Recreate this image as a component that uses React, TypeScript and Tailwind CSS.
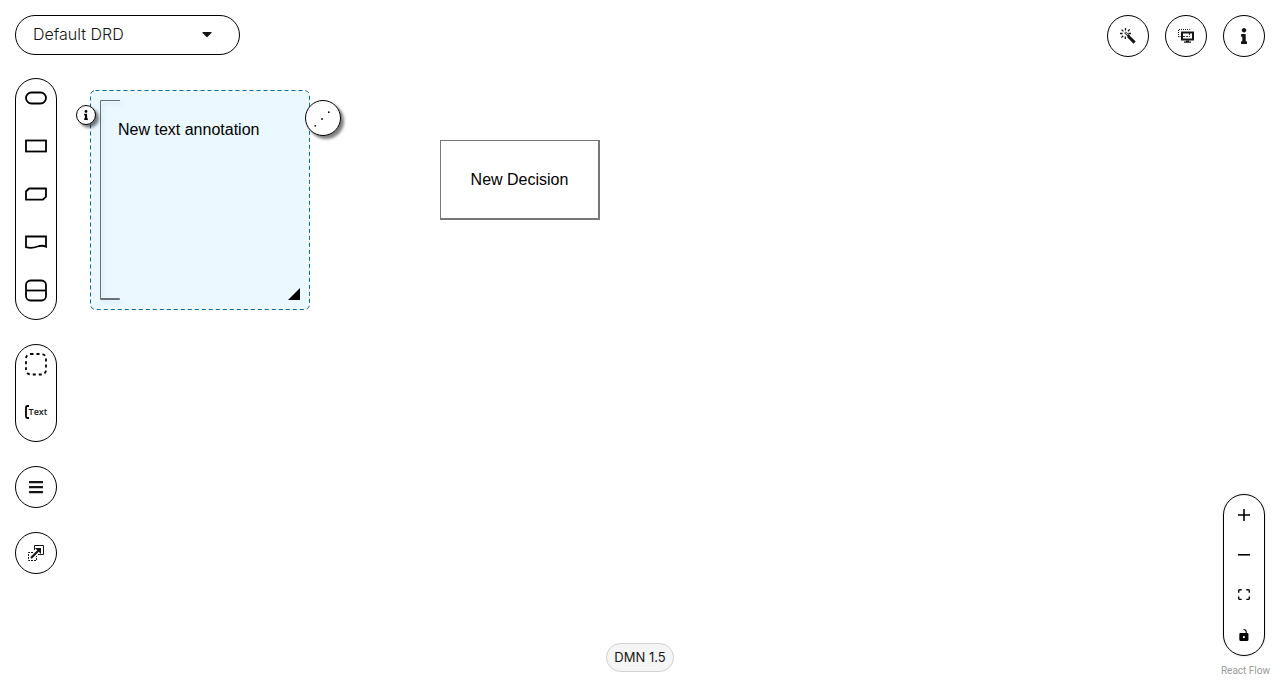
import type { ReactNode } from "react";
import { FaBars, FaCaretDown, FaInfo } from "react-icons/fa";

function Round({ label, children }: { label: string; children: ReactNode }) {
  return (
    <button
      type="button"
      aria-label={label}
      className="flex size-[42px] shrink-0 items-center justify-center rounded-full border border-black bg-white pb-px text-[#151515]"
    >
      {children}
    </button>
  );
}

function PaletteItem({ label, children }: { label: string; children: ReactNode }) {
  return (
    <button type="button" aria-label={label} className="flex h-[38px] w-10 items-center justify-center">
      {children}
    </button>
  );
}

function Shape({ children }: { children: ReactNode }) {
  return (
    <svg width="24" height="24" viewBox="0 0 24 24" fill="none" stroke="#000" strokeWidth="1.8" aria-hidden="true">
      {children}
    </svg>
  );
}

function Control({ label, viewBox, d }: { label: string; viewBox: string; d: string }) {
  return (
    <button type="button" aria-label={label} className="flex size-10 items-center justify-center">
      <svg viewBox={viewBox} className="max-h-3 w-3" aria-hidden="true">
        <path d={d} />
      </svg>
    </button>
  );
}

function WandIcon() {
  return (
    <svg width="16" height="16" viewBox="0 0 16 16" fill="none" stroke="#151515" aria-hidden="true">
      <path d="M8 8l6.6 6.6" strokeWidth="3" />
      <path d="M5 4.2l4 4" strokeWidth="2.2" />
      <path d="M5.2 4.4l2.6 2.6" stroke="#fff" strokeWidth="0.9" />
      <path
        d="M5.5 0v2.6M1.6 1.6l1.8 1.8M0 5.5h2.6M1.4 9.6l1.9-1.9M5.3 11V8.4M9.7 1.4L7.9 3.2M11 5.5H8.4"
        strokeWidth="1.3"
      />
    </svg>
  );
}

function ScreensIcon() {
  return (
    <svg width="16" height="16" viewBox="0 0 16 16" fill="none" stroke="#151515" aria-hidden="true">
      <path d="M.5 9V1.5h11V3M.5 8.5H3" strokeDasharray="1 1" />
      <rect x="4" y="4.5" width="11" height="7" strokeWidth="2" />
      <path d="M5 8.5h7M11.5 5v3" strokeDasharray="2 1" strokeWidth="0.9" />
      <path d="M8 13h3M6 14.2h7" strokeWidth="1.2" />
    </svg>
  );
}

function ExpandIcon() {
  return (
    <svg width="16" height="16" viewBox="0 0 16 16" fill="none" stroke="#151515" aria-hidden="true">
      <path d="M6.5 5V.5h9v9H10" />
      <path d="M5 7.5H.5v8h8V11" strokeDasharray="2 1" />
      <path d="M3 13l8-8" strokeWidth="2.2" />
      <path d="M7 3h6v6z" fill="#151515" stroke="none" />
    </svg>
  );
}

const box = "w-[42px] rounded-[21px] border border-black bg-white";

export default function App() {
  return (
    <div className="relative flex min-h-screen flex-col bg-white font-['Inter','Liberation_Sans',sans-serif] text-[#151515]">
      <main className="absolute inset-0 overflow-hidden font-['Liberation_Sans',Arial,sans-serif] text-base text-black">
        <section aria-label="Text annotation" className="absolute top-[90px] left-[90px] h-[220px] w-[220px]">
          <svg width="220" height="220" viewBox="0 0 220 220" fill="none" className="absolute inset-0" aria-hidden="true">
            <rect x=".5" y=".5" width="219" height="219" rx="5" fill="#ebf8ff" stroke="#006ba4" strokeDasharray="4 3" />
            <path
              d="M30 10.5H10.5V209H30"
              stroke="#6b7074"
              className="drop-shadow-[2px_3px_2px_rgba(0,75,120,0.15)]"
            />
            <path d="M29.5 209h-19" stroke="#6b7074" strokeWidth="2" />
            <path d="M210 198v12h-12z" fill="#000" />
          </svg>
          <p className="relative pt-[30px] pl-7 leading-5">New text annotation</p>
          <button
            type="button"
            aria-label="Node properties"
            className="absolute top-[15px] -left-3.5 flex size-5 items-center justify-center rounded-full border border-black bg-white shadow-[3px_3px_3px_rgba(0,0,0,0.5)]"
          >
            <FaInfo size={10} />
          </button>
          <button
            type="button"
            aria-label="Add association"
            className="absolute top-2.5 left-[215px] flex size-9 items-center justify-center rounded-full border border-black bg-white shadow-[3px_3px_3px_rgba(0,0,0,0.5)]"
          >
            <svg width="20" height="20" viewBox="0 0 20 20" aria-hidden="true">
              <circle cx="2.2" cy="17.8" r="0.9" />
              <circle cx="9" cy="11" r="0.9" />
              <circle cx="15.8" cy="4.2" r="0.9" />
            </svg>
          </button>
        </section>
        <section
          aria-label="Decision"
          className="absolute top-[140px] left-[440px] flex h-20 w-40 items-center justify-center border-t border-r-2 border-b-2 border-l border-[#777] bg-white"
        >
          <p>New Decision</p>
        </section>
      </main>

      <header className="flex items-start justify-between px-[15px] pt-[15px]">
        <div className="relative">
          <select
            aria-label="Diagram"
            className="h-10 w-[225px] appearance-none rounded-full border border-black bg-white pr-10 pb-0.5 pl-[17px] text-base font-light"
          >
            <option>Default DRD</option>
          </select>
          <FaCaretDown size={16} className="pointer-events-none absolute top-[11px] right-[25px]" />
        </div>
        <div className="relative flex gap-4">
          <Round label="Autolayout"><WandIcon /></Round>
          <Round label="Overlays"><ScreensIcon /></Round>
          <Round label="Properties"><FaInfo size={16} /></Round>
        </div>
      </header>

      <div className="pointer-events-none grid flex-1 grid-cols-[1fr_auto_1fr] pt-[21px]">
        <aside className="pointer-events-auto relative ml-[15px] flex flex-col gap-6 justify-self-start">
          <div className={`${box} flex flex-col gap-2.5 pb-2.5`}>
            <PaletteItem label="Input Data"><Shape><rect x="2" y="6.5" width="20" height="11" rx="5.5" /></Shape></PaletteItem>
            <PaletteItem label="Decision"><Shape><rect x="2" y="6.5" width="20" height="11" /></Shape></PaletteItem>
            <PaletteItem label="Business Knowledge Model"><Shape><path d="M5 6.5h17v8.2l-3 3H2V9.5z" strokeLinejoin="round" /></Shape></PaletteItem>
            <PaletteItem label="Knowledge Source"><Shape><path d="M2 6.5h20v10.3c-3-1.6-5.500-1.300-8.500-.3-4 1.500-8 1.600-11.500.6z" /></Shape></PaletteItem>
            <PaletteItem label="Decision Service"><Shape><rect x="2" y="2.500" width="20" height="20" rx="4.500" /><path d="M2 12.500h20" /></Shape></PaletteItem>
          </div>
          <div className={`${box} flex flex-col gap-2.5 pb-2.5`}>
            <PaletteItem label="Group"><Shape><rect x="2" y="2" width="20" height="20.500" rx="4.500" strokeDasharray="3 3" /></Shape></PaletteItem>
            <PaletteItem label="Text Annotation">
              <svg width="4" height="14" viewBox="0 0 4 14" fill="none" stroke="#000" strokeWidth="1.800" aria-hidden="true">
                <path d="M4 1H2.500Q1 1 1 2.500v9Q1 13 2.500 13H4" />
              </svg>
              <span className="font-['Open_Sans','Noto_Sans',sans-serif] text-[9px] leading-3 font-semibold">Text</span>
            </PaletteItem>
          </div>
          <Round label="External nodes"><FaBars size={16} /></Round>
          <Round label="Available nodes"><ExpandIcon /></Round>
        </aside>

        <div className="relative mb-2 flex h-[29px] items-center self-end rounded-full border border-[#d2d2d2] bg-[#f5f5f5] px-[7px] text-[13px]">
          DMN 1.5
        </div>

        <aside className="pointer-events-auto relative flex flex-col items-end justify-end">
          <div className={`${box} mr-[15px] shadow-[0_0_2px_1px_rgba(0,0,0,0.08)]`}>
            <Control
              label="Zoom in"
              viewBox="0 0 32 32"
              d="M32 18.133H18.133V32h-4.266V18.133H0v-4.266h13.867V0h4.266v13.867H32z"
            />
            <Control label="Zoom out" viewBox="0 0 32 5" d="M0 0h32v4.2H0z" />
            <Control
              label="Fit view"
              viewBox="0 0 32 30"
              d="M3.692 4.63c0-.53.4-.938.939-.938h5.215V0H4.708C2.13 0 0 2.054 0 4.63v5.216h3.692V4.631zM27.354 0h-5.2v3.692h5.17c.53 0 .984.4.984.939v5.215H32V4.631A4.624 4.624 0 0027.354 0zm.954 24.83c0 .532-.4.94-.939.94h-5.215v3.768h5.215c2.577 0 4.631-2.13 4.631-4.707v-5.139h-3.692v5.139zm-23.677.94c-.531 0-.939-.4-.939-.94v-5.138H0v5.139c0 2.577 2.13 4.707 4.708 4.707h5.138V25.77H4.631z"
            />
            <Control
              label="Toggle interactivity"
              viewBox="0 0 25 32"
              d="M21.333 10.667H19.81V7.619C19.81 3.429 16.38 0 12.19 0c-4.114 1.828-1.37 2.133.305 2.438 1.676.305 4.42 2.59 4.42 5.181v3.048H3.047A3.056 3.056 0 000 13.714v15.238A3.056 3.056 0 003.048 32h18.285a3.056 3.056 0 003.048-3.048V13.714a3.056 3.056 0 00-3.047-3.047zM12.19 24.533a3.056 3.056 0 01-3.047-3.047 3.056 3.056 0 013.047-3.048 3.056 3.056 0 013.048 3.048 3.056 3.056 0 01-3.048 3.047z"
            />
          </div>
          <a
            href="#attribution"
            className="mt-2 mr-2.5 mb-0.5 font-['Roboto',sans-serif] text-[10px] leading-[14px] text-[#999]"
          >
            React Flow
          </a>
        </aside>
      </div>
    </div>
  );
}
